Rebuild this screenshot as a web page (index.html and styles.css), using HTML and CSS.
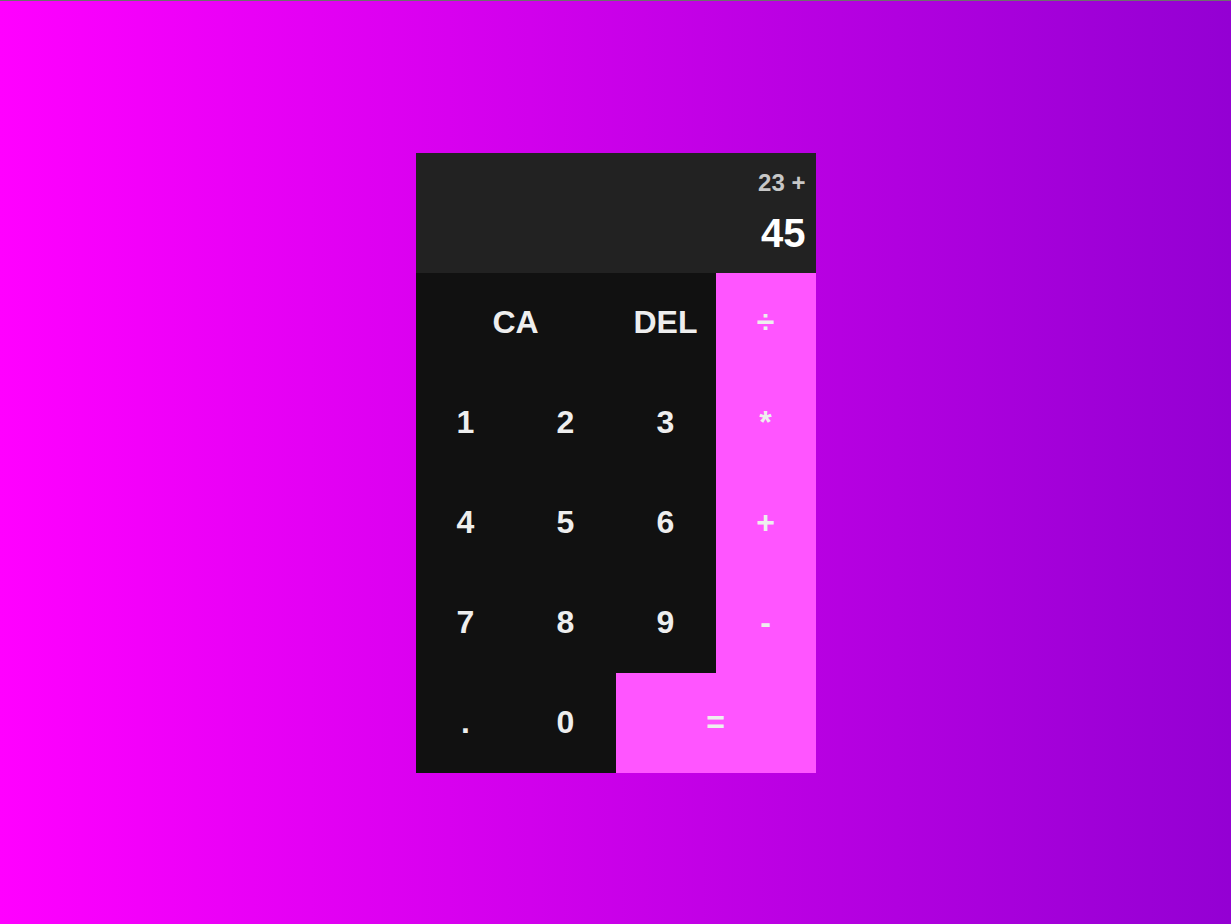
FILE: index.html
```html
<!DOCTYPE html>
<html lang="en">
<head>
<meta charset="UTF-8">
<title>Calculator</title>
<link rel="stylesheet" href="styles.css">
</head>
<body>
<div class="calculator-grid">
  <div class="output">
    <div class="previous-operand">23 +</div>
    <div class="current-operand">45</div>
  </div>
  <button class="span-two">CA</button>
  <button>DEL</button>
  <button class="op">÷</button>
  <button>1</button>
  <button>2</button>
  <button>3</button>
  <button class="op">*</button>
  <button>4</button>
  <button>5</button>
  <button>6</button>
  <button class="op">+</button>
  <button>7</button>
  <button>8</button>
  <button>9</button>
  <button class="op">-</button>
  <button>.</button>
  <button>0</button>
  <button class="op span-two">=</button>
</div>
</body>
</html>
```

FILE: styles.css
```css
*, *::before, *::after {
  box-sizing: border-box;
  font-family: "Liberation Sans", Arial, sans-serif;
  font-weight: bold;
}

html, body {
  margin: 0;
  padding: 0;
}

body {
  min-height: 100vh;
  border-top: 1px solid #6e6e6e;
  background: linear-gradient(to right, #ff00ff, #9400d3);
}

.calculator-grid {
  display: grid;
  justify-content: center;
  align-content: center;
  min-height: calc(100vh - 1px);
  grid-template-columns: repeat(4, 100px);
  grid-template-rows: minmax(120px, auto) repeat(5, 100px);
}

.calculator-grid > button {
  cursor: pointer;
  font-size: 2rem;
  border: none;
  outline: none;
  background-color: #111111;
  color: #eeeeee;
  padding: 0;
}

.calculator-grid > button.op {
  background-color: #ff55ff;
}

.span-two {
  grid-column: span 2;
}

.output {
  grid-column: 1 / -1;
  background-color: #222222;
  display: flex;
  align-items: flex-end;
  justify-content: space-around;
  flex-direction: column;
  padding: 10px;
  word-wrap: break-word;
  word-break: break-all;
}

.previous-operand {
  color: rgba(255, 255, 255, 0.75);
  font-size: 1.5rem;
}

.current-operand {
  color: white;
  font-size: 2.5rem;
}
```
